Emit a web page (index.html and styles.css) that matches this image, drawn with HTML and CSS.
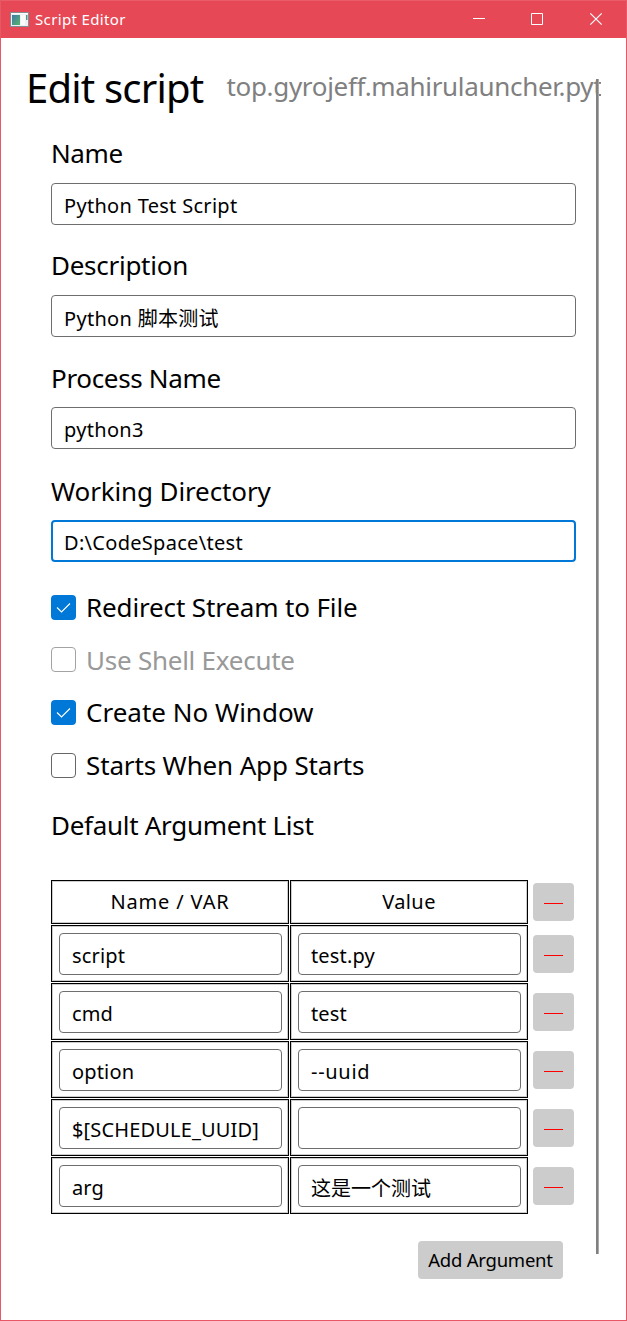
FILE: index.html
```html
<!DOCTYPE html>
<html lang="en">
<head>
<meta charset="utf-8">
<title>Script Editor</title>
<link rel="stylesheet" href="styles.css">
</head>
<body>
<div class="window">
  <header class="titlebar">
    <svg class="app-icon" width="20" height="17" viewBox="0 0 20 17">
      <defs><linearGradient id="pane" x1="0" y1="0" x2="1" y2="1"><stop offset="0" stop-color="#4379a6"/><stop offset="1" stop-color="#56b66d"/></linearGradient></defs>
      <rect x=".5" y="1.500" width="18" height="14" fill="#edf0f2" stroke="#858b90"/>
      <path d="M1 2.500h17" stroke="#fff"/>
      <rect x="2" y="4" width="8" height="10" fill="url(#pane)"/>
      <rect x="11" y="4" width="4" height="10" fill="#fafafa"/>
      <rect x="16" y="4" width="1.500" height="5" fill="#4b9a8c"/>
    </svg>
    <span class="title">Script Editor</span>
    <svg class="controls" width="131" height="14" viewBox="0 0 131 14" fill="none" stroke="#fff">
      <path d="M0 6.500h12"/><path d="M58.500 1.500h11v11h-11z"/><path d="M117.300 1.300l11.400 11.400M128.700 1.300l-11.400 11.400" stroke-width="1.200"/>
    </svg>
  </header>
  <main class="content">
    <div class="heading"><h1>Edit script</h1><span class="ident">top.gyrojeff.mahirulauncher.pyt</span></div>
    <div class="scroll-track"></div>
    <div class="form">
      <label class="field"><span class="label name">Name</span><input class="box" value="Python Test Script"></label>
      <label class="field"><span class="label desc">Description</span><input class="box" value="Python 脚本测试"></label>
      <label class="field tall"><span class="label proc">Process Name</span><input class="box" value="python3"></label>
      <label class="field"><span class="label work">Working Directory</span><input class="box active" value="D:\CodeSpace\test"></label>
      <div class="checks">
        <div class="check"><span class="tick on"><svg width="25" height="25" viewBox="0 0 25 25"><path d="M6 12.500l4.500 4.500L19 8.500"/></svg></span><span class="label c1">Redirect Stream to File</span></div>
        <div class="check disabled"><span class="tick"></span><span class="label c2">Use Shell Execute</span></div>
        <div class="check"><span class="tick on"><svg width="25" height="25" viewBox="0 0 25 25"><path d="M6 12.500l4.500 4.500L19 8.500"/></svg></span><span class="label c3">Create No Window</span></div>
        <div class="check"><span class="tick"></span><span class="label c4">Starts When App Starts</span></div>
      </div>
      <div class="label args-title">Default Argument List</div>
      <div class="args">
        <div class="row head"><div class="cell wide">Name / VAR</div><div class="cell">Value</div><button class="remove"><i></i></button></div>
        <div class="row"><div class="cell"><input class="box" value="script"></div><div class="cell"><input class="box" value="test.py"></div><button class="remove"><i></i></button></div>
        <div class="row"><div class="cell"><input class="box" value="cmd"></div><div class="cell"><input class="box" value="test"></div><button class="remove"><i></i></button></div>
        <div class="row"><div class="cell"><input class="box" value="option"></div><div class="cell"><input class="box loose" value="--uuid"></div><button class="remove"><i></i></button></div>
        <div class="row"><div class="cell"><input class="box" value="$[SCHEDULE_UUID]"></div><div class="cell"><input class="box" value=""></div><button class="remove"><i></i></button></div>
        <div class="row"><div class="cell"><input class="box" value="arg"></div><div class="cell"><input class="box cjk" value="这是一个测试"></div><button class="remove"><i></i></button></div>
      </div>
      <button class="add">Add Argument</button>
    </div>
  </main>
</div>
</body>
</html>
```
FILE: styles.css
```css
* { box-sizing: border-box; }
body { margin: 0; background: #fff; }
body, input, button { font-family: "Noto Sans", "Noto Sans CJK SC", sans-serif; color: #000; }
.window { width: 627px; height: 1321px; border: 1px solid #e85766; border-top: 0; overflow: hidden; }
.titlebar { height: 38px; background: #e74856; border-top: 1px solid #e95c69; display: flex; align-items: center; padding: 0 22px 0 9px; }
.title { color: #fff; font-size: 15px; margin: -2px 0 0 5px; letter-spacing: 0.350px; }
.controls { margin: -1px 0 0 auto; }
.content { position: relative; padding: 22px 25px 0 25px; }
.heading { display: flex; height: 75px; white-space: nowrap; overflow: hidden; line-height: 56px; }
h1 { margin: 0; font-size: 40px; font-weight: 400; letter-spacing: -0.800px; }
.ident { font-size: 26px; line-height: 53px; color: #808080; margin-left: 23px; letter-spacing: -0.320px; }
.scroll-track { position: absolute; left: 595px; top: 41px; width: 3px; height: 1175px; background: linear-gradient(90deg, #808080 2px, #a9a9a9 2px); }
.form { padding: 0 25px; }
.field { display: block; height: 112px; }
.field.tall { height: 113px; }
.label { display: block; font-size: 26px; line-height: 36px; white-space: nowrap; }
.field .label { margin-bottom: 12px; }
.name { letter-spacing: -0.400px; }
.desc { letter-spacing: -0.270px; }
.proc { letter-spacing: -0.330px; position: relative; top: 1px; }
.work { letter-spacing: -0.120px; position: relative; top: 1px; }
.c1, .c4 { letter-spacing: -0.140px; }
.c2 { letter-spacing: -0.250px; }
.box { display: block; width: 100%; height: 42px; border: 1px solid #6e6e6e; border-radius: 4px; padding: 3px 12px 0; font-size: 20px; letter-spacing: 0.300px; background: #fff; outline: none; }
.cell .box { letter-spacing: 0.150px; }
.cell .box.loose { letter-spacing: 0.700px; }
.cell .box.cjk { letter-spacing: 0; }
.box.active { border: 2px solid #0078d7; padding: 3px 11px 0; }
.checks { display: flex; flex-direction: column; gap: 16.700px; padding-top: 5px; }
.check { display: flex; align-items: center; gap: 10px; height: 36px; }
.tick { width: 25px; height: 25px; border: 1px solid #666; border-radius: 4px; }
.tick.on { background: #0078d7; border: 0; }
.tick svg { display: block; fill: none; stroke: #fff; stroke-width: 1.100; }
.disabled .label { color: #999; }
.disabled .tick { border-color: #a3a3a3; }
.args-title { margin-top: 24px; letter-spacing: -0.290px; }
.args { margin-top: 37px; display: flex; flex-direction: column; gap: 1px; }
.row { display: flex; gap: 1px; height: 57px; }
.row.head { height: 44px; }
.cell { width: 238px; flex: none; border: 1px solid #000; box-shadow: inset 0 0 0 1px #ccc; padding: 7px 6px 6px 7px; }
.head .cell { text-align: center; font-size: 20px; line-height: 42px; padding: 0; letter-spacing: 0.400px; }
.head .cell.wide { letter-spacing: 0.850px; }
.remove { width: 41px; height: 38px; flex: none; margin: 9.500px 0 0 3.500px; padding: 0; border: 0; border-radius: 4px; background: #ccc; display: flex; align-items: center; justify-content: center; }
.head .remove { margin-top: 2.500px; }
.remove i { width: 19px; height: 1px; background: #f00; margin-top: 3px; }
.add { display: block; margin: 26.500px 13px 0 auto; width: 145px; height: 38px; padding: 0 0 1px; border: 0; border-radius: 4px; background: #ccc; font-size: 18.500px; letter-spacing: -0.230px; white-space: nowrap; }
```
